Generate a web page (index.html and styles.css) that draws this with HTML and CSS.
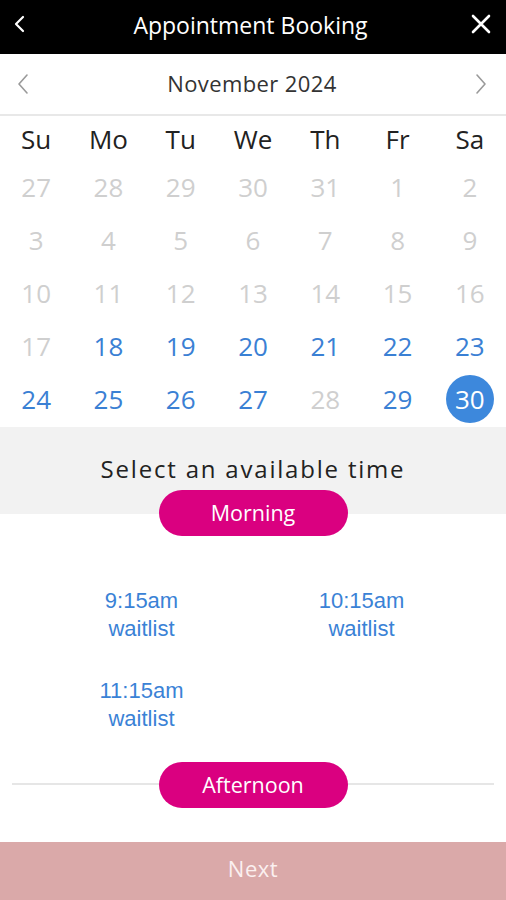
FILE: index.html
```html
<!DOCTYPE html>
<html lang="en">
<head>
<meta charset="utf-8">
<title>Appointment Booking</title>
<link rel="stylesheet" href="styles.css">
</head>
<body>
<div class="app">
  <header class="topbar">
    <svg class="top-icon" viewBox="0 0 20 20" width="20" height="20"><path d="M13 3 L6 10 L13 17" fill="none" stroke="#fff" stroke-width="2.2" stroke-linecap="round" stroke-linejoin="round"/></svg>
    <h1 class="title">Appointment Booking</h1>
    <svg class="top-icon" viewBox="0 0 20 20" width="20" height="20"><path d="M2 2 L18 18 M18 2 L2 18" fill="none" stroke="#fff" stroke-width="2.6" stroke-linecap="round"/></svg>
  </header>

  <div class="month-nav">
    <svg class="nav-icon" viewBox="0 0 12 22" width="12" height="22"><path d="M10 2 L2 11 L10 20" fill="none" stroke="#9a9a9a" stroke-width="1.6" stroke-linecap="round" stroke-linejoin="round"/></svg>
    <span class="month">November 2024</span>
    <svg class="nav-icon" viewBox="0 0 12 22" width="12" height="22"><path d="M2 2 L10 11 L2 20" fill="none" stroke="#9a9a9a" stroke-width="1.6" stroke-linecap="round" stroke-linejoin="round"/></svg>
  </div>

  <div class="weekdays">
    <span>Su</span><span>Mo</span><span>Tu</span><span>We</span><span>Th</span><span>Fr</span><span>Sa</span>
  </div>

  <div class="dates">
    <span class="d off">27</span><span class="d off">28</span><span class="d off">29</span><span class="d off">30</span><span class="d off">31</span><span class="d off">1</span><span class="d off">2</span>
    <span class="d off">3</span><span class="d off">4</span><span class="d off">5</span><span class="d off">6</span><span class="d off">7</span><span class="d off">8</span><span class="d off">9</span>
    <span class="d off">10</span><span class="d off">11</span><span class="d off">12</span><span class="d off">13</span><span class="d off">14</span><span class="d off">15</span><span class="d off">16</span>
    <span class="d off">17</span><span class="d on">18</span><span class="d on">19</span><span class="d on">20</span><span class="d on">21</span><span class="d on">22</span><span class="d on">23</span>
    <span class="d on">24</span><span class="d on">25</span><span class="d on">26</span><span class="d on">27</span><span class="d off">28</span><span class="d on">29</span><span class="d sel"><span class="sel-circle">30</span></span>
  </div>

  <section class="time-head">
    <p class="prompt">Select an available time</p>
    <div class="pill">Morning</div>
  </section>

  <div class="slots">
    <div class="slot"><span>9:15am</span><span>waitlist</span></div>
    <div class="slot"><span>10:15am</span><span>waitlist</span></div>
    <div class="slot"><span>11:15am</span><span>waitlist</span></div>
  </div>

  <div class="divider-row">
    <div class="pill">Afternoon</div>
  </div>

  <footer class="next-bar">Next</footer>
</div>
</body>
</html>
```

FILE: styles.css
```css
* { box-sizing: border-box; }
html, body { margin: 0; padding: 0; }
body {
  width: 506px;
  height: 900px;
  background: #fff;
  font-family: "Open Sans", "Liberation Sans", sans-serif;
  overflow: hidden;
}
.app {
  display: flex;
  flex-direction: column;
  height: 900px;
}
.topbar {
  height: 54px;
  background: #000;
  display: flex;
  align-items: center;
  justify-content: space-between;
  padding: 0 15px 0 10px;
}
.top-icon { display: block; margin-top: -6px; }
.title {
  margin: 0;
  color: #fff;
  font-weight: 400;
  font-size: 23px;
  margin-top: -5px;
}
.month-nav {
  height: 62px;
  display: flex;
  align-items: center;
  justify-content: space-between;
  padding: 0 19px 0 17px;
  border-bottom: 2px solid #e8e8e8;
}
.month {
  font-size: 22px;
  color: #333;
  letter-spacing: 0.4px;
  margin-top: -3px;
}
.nav-icon { display: block; }
.weekdays {
  display: grid;
  grid-template-columns: repeat(7, 1fr);
  height: 44px;
  align-items: center;
  justify-items: center;
  font-size: 26px;
  color: #222;
  padding-top: 1px;
}
.dates {
  display: grid;
  grid-template-columns: repeat(7, 1fr);
  grid-auto-rows: 53px;
  align-items: center;
  justify-items: center;
  font-size: 26px;
  padding-bottom: 2px;
}
.d.off { color: #cfcfcf; }
.d.on { color: #3a80d4; }
.sel-circle {
  display: flex;
  align-items: center;
  justify-content: center;
  width: 48px;
  height: 48px;
  border-radius: 50%;
  background: #3d88dc;
  color: #fff;
}
.time-head {
  display: flex;
  flex-direction: column;
  align-items: center;
  background: linear-gradient(#f2f2f2 0, #f2f2f2 87px, #fff 87px);
  padding-top: 26px;
}
.prompt {
  margin: 0;
  font-size: 24px;
  letter-spacing: 1.8px;
  color: #222;
  line-height: 32px;
}
.pill {
  width: 189px;
  height: 46px;
  border-radius: 23px;
  background: #da0080;
  color: #fff;
  font-size: 21.5px;
  display: flex;
  align-items: center;
  justify-content: center;
  padding-bottom: 2px;
}
.time-head .pill { margin-top: 5px; }
.slots {
  display: grid;
  grid-template-columns: 220px 220px;
  justify-content: center;
  margin: 51px 0 0 -3px;
  row-gap: 34px;
}
.slot {
  display: flex;
  flex-direction: column;
  align-items: center;
  font-family: "Liberation Sans", Arial, sans-serif;
  font-size: 22px;
  line-height: 28px;
  color: #3a82d6;
}
.divider-row {
  margin: 29px 12px 0 12px;
  display: flex;
  justify-content: center;
  background: linear-gradient(transparent 21px, #e6e6e6 21px, #e6e6e6 23px, transparent 23px);
}
.next-bar {
  margin-top: auto;
  height: 58px;
  background: #daa9a9;
  color: #fbf0f0;
  font-size: 22px;
  display: flex;
  align-items: center;
  justify-content: center;
  letter-spacing: 0.5px;
  padding-bottom: 6px;
}
```
